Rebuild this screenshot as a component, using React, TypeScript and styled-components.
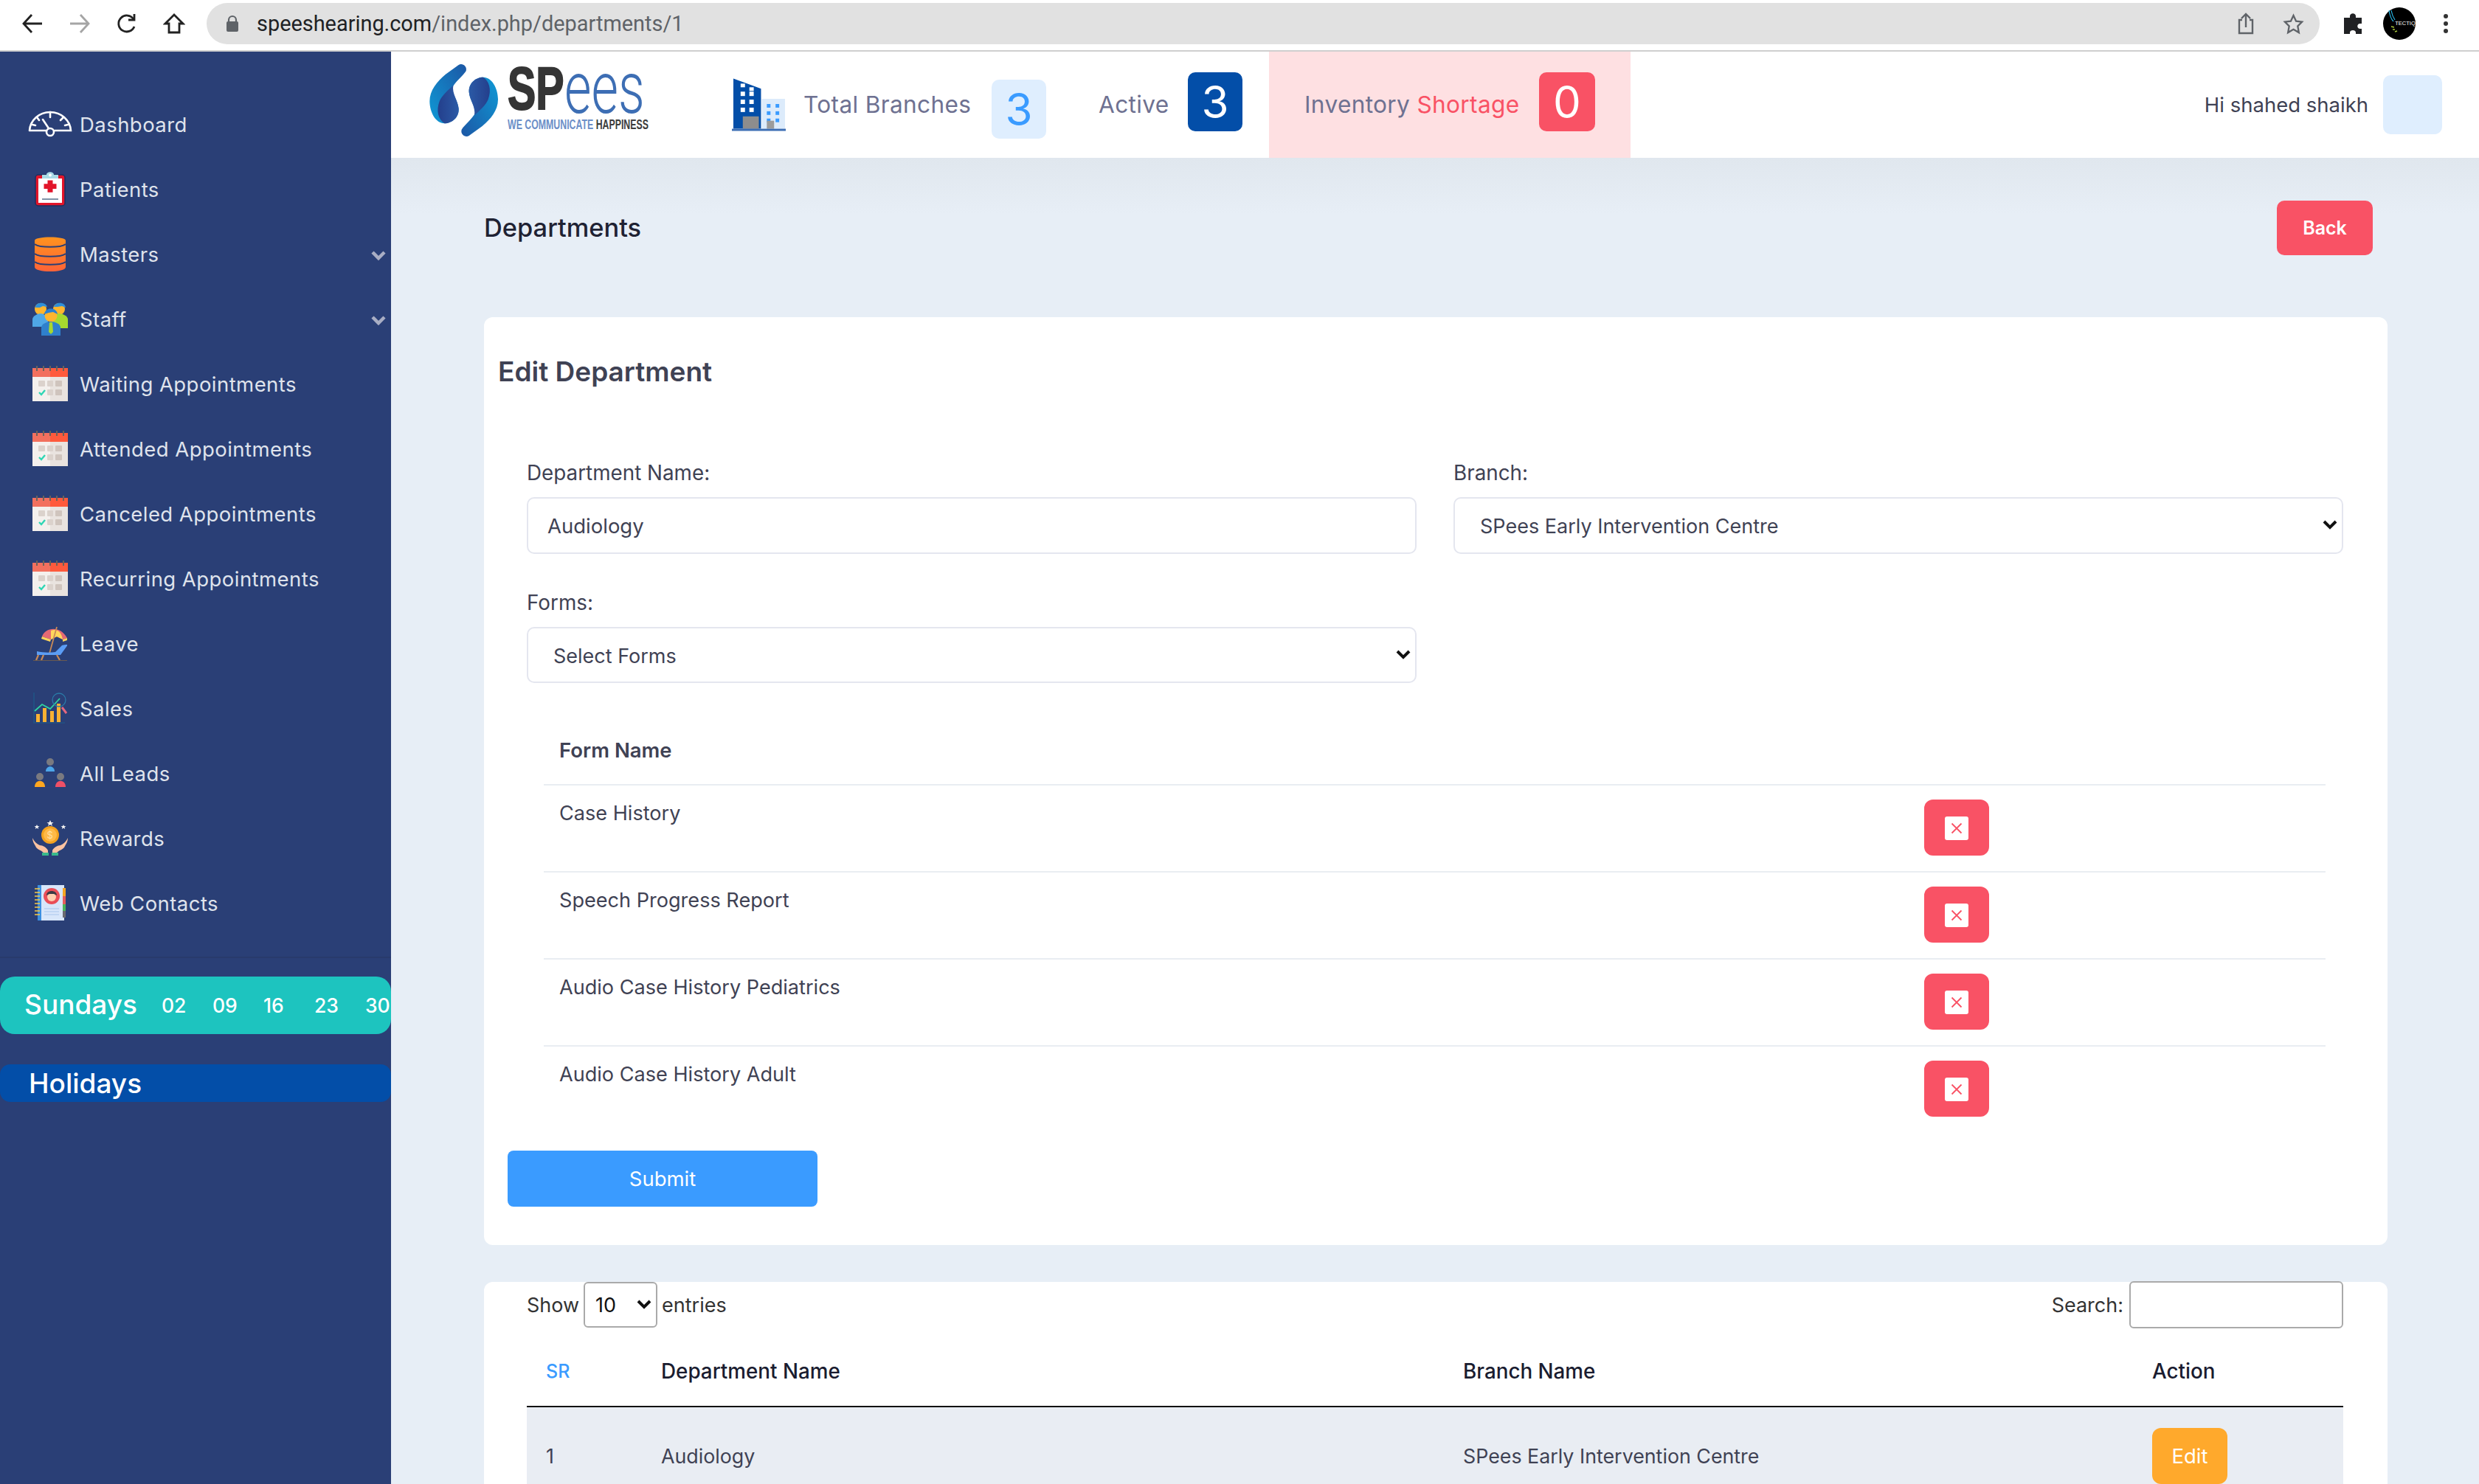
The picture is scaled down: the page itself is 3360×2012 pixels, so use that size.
import React from "react";
import styled, { createGlobalStyle } from "styled-components";

const FONT = `Inter, "Noto Sans", "Liberation Sans", sans-serif`;

const Global = createGlobalStyle`
  html, body { margin: 0; padding: 0; background: #e7eef6; }
  * { box-sizing: border-box; }
  body { font-family: ${FONT}; }
`;

const Page = styled.div`
  width: 3360px;
  height: 2012px;
  overflow: hidden;
  display: flex;
  flex-direction: column;
`;

/* browser chrome */
const Chrome = styled.div`
  height: 70px;
  flex: none;
  background: #fff;
  border-bottom: 2px solid #cfcfcf;
  display: flex;
  align-items: flex-start;
  padding-top: 4px;
`;
const NavIcons = styled.div`
  width: 280px;
  height: 56px;
  flex: none;
  display: grid;
  grid-template-columns: repeat(4, 64px);
  padding-left: 12px;
  align-items: center;
  justify-items: center;
`;
const UrlPill = styled.div`
  width: 2864px;
  height: 56px;
  flex: none;
  background: #e1e1e1;
  border-radius: 28px;
  display: flex;
  align-items: center;
  padding: 0 21px 0 26px;
`;
const Url = styled.div`
  margin-left: 24px;
  flex: 1;
  font: 400 28.9px Roboto, sans-serif;
  color: #5f6368;
  white-space: nowrap;
`;
const UrlHost = styled.span`
  color: #202124;
`;
const PillIcons = styled.div`
  display: flex;
  align-items: center;
  gap: 39px;
`;
const ChromeRight = styled.div`
  flex: 1;
  height: 56px;
  display: flex;
  align-items: center;
  padding-left: 30px;
`;
const PuzzleSlot = styled.div`
  width: 56px;
  display: flex;
`;
const AvatarSlot = styled.div`
  width: 81px;
  display: flex;
`;

const Body = styled.div`
  flex: 1;
  display: flex;
  min-height: 0;
`;

/* sidebar */
const Side = styled.aside`
  width: 530px;
  flex: none;
  background: #2a3f76;
  padding-top: 54px;
`;
const NavRow = styled.div`
  height: 88px;
  display: flex;
  align-items: center;
  padding: 0 7px 0 38px;
  color: #dfe3ec;
  font-size: 27.5px;
  font-weight: 400;
  letter-spacing: 0.45px;
`;
const IconSlot = styled.div`
  width: 60px;
  flex: none;
  display: flex;
  justify-content: center;
  margin-right: 10px;
`;
const NavLabel = styled.span`
  flex: 1;
  white-space: nowrap;
  margin-top: 2px;
`;
const ChevronSlot = styled.span`
  display: flex;
  margin-top: 5px;
`;
const Divider = styled.div`
  height: 2px;
  margin-top: 29px;
  background: #283a6c;
`;
const Sundays = styled.div`
  height: 78px;
  margin-top: 25px;
  background: #1dc4bf;
  border-radius: 20px;
  display: flex;
  align-items: center;
  color: #fff;
  padding-left: 33px;
  white-space: nowrap;
`;
const SundaysTitle = styled.span`
  width: 186px;
  flex: none;
  font-size: 37px;
  font-weight: 500;
  line-height: 44px;
  margin-top: -2px;
`;
const Dates = styled.div`
  display: grid;
  grid-template-columns: repeat(5, 69px);
  font-size: 26.5px;
  font-weight: 500;
`;
const Holidays = styled.div`
  height: 51px;
  margin-top: 41px;
  background: #034ea8;
  border-radius: 14px;
  display: flex;
  align-items: center;
  padding-left: 39px;
  color: #fff;
  font-size: 37px;
  font-weight: 500;
`;

/* main column */
const Main = styled.main`
  flex: 1;
  min-width: 0;
  display: flex;
  flex-direction: column;
  background: linear-gradient(#e0e7ee 144px, #e7eef6 220px, #e7eef6 100%);
`;
const Header = styled.header`
  height: 144px;
  flex: none;
  background: #fff;
  display: flex;
  align-items: stretch;
`;
const LogoBox = styled.div`
  width: 412px;
  flex: none;
  padding: 14px 0 0 49px;
  display: flex;
`;
const LogoText = styled.div`
  margin-left: 9px;
  width: 190px;
`;
const LogoWord = styled.div`
  height: 72px;
  display: flex;
  align-items: flex-end;
  font-family: "Liberation Sans", sans-serif;
  white-space: nowrap;
`;
const LogoSP = styled.span`
  width: 77px;
  flex: none;
  display: block;
  transform: scaleX(0.7);
  transform-origin: left bottom;
  font-size: 82px;
  line-height: 72px;
  font-weight: 700;
  color: #353535;
  -webkit-text-stroke: 2px #353535;
`;
const LogoEes = styled.span`
  display: block;
  transform: scaleX(0.72);
  transform-origin: left bottom;
  font-family: Roboto, sans-serif;
  font-size: 98px;
  line-height: 72px;
  font-weight: 300;
  color: #3d6eb4;
`;
const LogoTag = styled.div`
  margin-top: 4px;
  font: 700 18px/18px "Liberation Sans", sans-serif;
  color: #6c8fc8;
  white-space: nowrap;
  transform: scaleX(0.685);
  transform-origin: left center;
`;
const LogoTagDark = styled.span`
  color: #3c3c3c;
`;
const Stat = styled.div<{ $w: number; $pad?: number; $bg?: string }>`
  width: ${(p) => p.$w}px;
  flex: none;
  display: flex;
  align-items: center;
  padding-left: ${(p) => p.$pad ?? 0}px;
  background: ${(p) => p.$bg ?? "transparent"};
`;
const StatLabel = styled.span<{ $w: number; $gap?: number }>`
  width: ${(p) => p.$w}px;
  margin-left: ${(p) => p.$gap ?? 0}px;
  flex: none;
  font-size: 31.6px;
  color: #6e7191;
  letter-spacing: 0.35px;
  white-space: nowrap;
  margin-top: -2px;
`;
const Shortage = styled.span`
  color: #f95265;
`;
const Count = styled.div<{ $bg: string; $fg: string; $w: number; $up: boolean }>`
  width: ${(p) => p.$w}px;
  height: 80px;
  flex: none;
  border-radius: 10px;
  background: ${(p) => p.$bg};
  color: ${(p) => p.$fg};
  font-size: 60px;
  line-height: 80px;
  text-align: center;
  margin-top: ${(p) => (p.$up ? -8 : 12)}px;
`;
const User = styled.div`
  flex: 1;
  display: flex;
  justify-content: flex-end;
  align-items: center;
  padding: 0 50px 0 0;
  gap: 20px;
  color: #3f4254;
  font-size: 27.5px;
  white-space: nowrap;
`;
const UserBox = styled.div`
  width: 80px;
  height: 80px;
  border-radius: 10px;
  background: #dfeefe;
`;

const Content = styled.div`
  padding: 58px 124px 0 126px;
`;
const PageHead = styled.div`
  height: 74px;
  display: flex;
  justify-content: space-between;
  align-items: center;
  padding-right: 20px;
`;
const PageTitle = styled.h1`
  margin: 0 0 2px;
  font-size: 34.4px;
  font-weight: 500;
  color: #1f2233;
`;
const BackBtn = styled.button`
  width: 130px;
  height: 74px;
  border: 0;
  border-radius: 10px;
  background: #f95265;
  color: #fff;
  font: 600 25px ${FONT};
`;
const Card = styled.section<{ $top: number; $bottom?: number }>`
  margin-top: ${(p) => p.$top}px;
  background: #fff;
  border-radius: 12px;
  padding-bottom: ${(p) => p.$bottom ?? 0}px;
`;
const CardTitle = styled.h2`
  margin: 0;
  padding: 50px 0 0 19px;
  font-size: 37px;
  line-height: 48px;
  font-weight: 600;
  color: #3f4254;
`;
const FormGrid = styled.div`
  margin: 93px 60px 0 58px;
  display: grid;
  grid-template-columns: 1206px 1206px;
  column-gap: 50px;
  row-gap: 46px;
`;
const Field = styled.div``;
const Label = styled.label`
  display: block;
  font-size: 27.8px;
  line-height: 40px;
  color: #3f4254;
  margin-bottom: 13px;
`;
const TextInput = styled.input`
  display: block;
  width: 100%;
  height: 77px;
  padding: 0 26px;
  border: 2px solid #e4e6ef;
  border-radius: 10px;
  font: 400 27.5px ${FONT};
  color: #3f4254;
  background: #fff;
  outline: none;
`;
const SelectWrap = styled.div`
  position: relative;
`;
const NativeSelect = styled.select<{ $h: number }>`
  display: block;
  width: 100%;
  height: ${(p) => p.$h}px;
  padding: 2px 32px 0 34px;
  border: 2px solid #e4e6ef;
  border-radius: 10px;
  appearance: none;
  font: 400 27px ${FONT};
  color: #3f4254;
  background: #fff;
  outline: none;
`;
const SelectArrow = styled.svg<{ $top: number }>`
  position: absolute;
  right: 8px;
  top: ${(p) => p.$top}px;
  width: 20px;
  height: 16px;
`;
const FormsTable = styled.div`
  margin: 71px 84px 0 81px;
`;
const FormsHead = styled.div`
  padding: 0 0 26px 21px;
  font-size: 27.5px;
  line-height: 40px;
  font-weight: 600;
  color: #3f4254;
`;
const FormRow = styled.div`
  height: 118px;
  border-top: 2px solid #e9edf2;
  padding: 18px 0 0 21px;
  display: grid;
  grid-template-columns: 1850px auto;
  align-items: start;
  font-size: 27.1px;
  line-height: 40px;
  color: #3f4254;
`;
const DeleteBtn = styled.button`
  width: 88px;
  height: 76px;
  margin-top: 1px;
  border: 0;
  padding: 0;
  border-radius: 12px;
  background: #f95265;
  display: flex;
  align-items: center;
  justify-content: center;
`;
const XBox = styled.span`
  width: 32px;
  height: 32px;
  margin-top: 1px;
  border-radius: 3px;
  background: #fff;
  display: flex;
  align-items: center;
  justify-content: center;
`;
const SubmitBtn = styled.button`
  display: block;
  width: 420px;
  height: 76px;
  margin: 25px 0 0 32px;
  border: 0;
  border-radius: 8px;
  background: #3a9bff;
  color: #fff;
  font: 400 27.5px ${FONT};
`;
const Toolbar = styled.div`
  height: 64px;
  padding: 0 60px 0 58px;
  display: flex;
  justify-content: space-between;
  align-items: flex-start;
  font-size: 27px;
  color: #333;
`;
const ToolGroup = styled.div`
  display: flex;
  align-items: center;
  gap: 6px;
  height: 62px;
  white-space: nowrap;
`;
const LenWrap = styled.div`
  position: relative;
`;
const LenSelect = styled.select`
  display: block;
  width: 100px;
  height: 62px;
  padding: 0 14px;
  border: 2px solid #aaa;
  border-radius: 6px;
  appearance: none;
  font: 400 27px ${FONT};
  color: #111;
  background: #fff;
`;
const SearchInput = styled.input`
  width: 290px;
  height: 64px;
  margin-left: 2px;
  border: 2px solid #aaa;
  border-radius: 6px;
  background: #fff;
  outline: none;
`;
const DataTable = styled.div`
  margin: 0 60px 0 58px;
`;
const DataHead = styled.div`
  height: 106px;
  padding: 10px 0 0 26px;
  border-bottom: 2px solid #111;
  display: grid;
  grid-template-columns: 156px 1087px 934px 1fr;
  align-items: center;
  font-size: 27.8px;
  font-weight: 500;
  color: #1a1c30;
`;
const SrHead = styled.span`
  color: #3a9bff;
  font-size: 25px;
`;
const DataRow = styled.div`
  height: 132px;
  padding-left: 26px;
  background: #e9edf3;
  display: grid;
  grid-template-columns: 156px 1087px 934px 1fr;
  align-items: center;
  font-size: 26.8px;
  color: #3f4254;
`;
const EditBtn = styled.button`
  width: 102px;
  height: 76px;
  border: 0;
  border-radius: 12px;
  background: #ffa92c;
  color: #fff;
  font: 400 27.5px ${FONT};
`;

/* icons */
const Gauge = () => (
  <svg width="60" height="36" viewBox="0 0 60 36" fill="none" stroke="#fff" strokeWidth="2.6" strokeLinecap="round">
    <path d="M2 27C3 13 15 2 30 2s27 11 28 25H36M24 27H2" />
    <circle cx="30" cy="29" r="5" />
    <path d="M28 24 20 12M30 2v7M12 9l3 4M48 9l-4 4M6 19l4 1M54 19l-4 1" />
  </svg>
);
const Clip = () => (
  <svg width="42" height="48" viewBox="0 0 42 48">
    <rect x="1" y="5" width="40" height="42" rx="4" fill="#e2152a" stroke="#1c2f60" strokeWidth="1.5" />
    <rect x="5" y="10" width="32" height="33" fill="#fff" />
    <path d="M10 10V5h6c0-5 10-5 10 0h6v5z" fill="#a9dbe6" />
    <circle cx="21" cy="5.5" r="2" fill="#fff" />
    <path d="M17.5 14h7v5h5v7h-5v5h-7v-5h-5v-7h5z" fill="#e2152a" transform="translate(0 -1) scale(1 .96)" />
    <rect x="10" y="37" width="22" height="2" fill="#7f93a8" />
  </svg>
);
const Db = () => (
  <svg width="42" height="48" viewBox="0 0 42 48">
    <defs>
      <linearGradient id="dbg" x1="0" y1="0" x2="0" y2="1">
        <stop offset="0" stopColor="#ff931e" />
        <stop offset="1" stopColor="#ff6338" />
      </linearGradient>
    </defs>
    <path d="M0 6C0 0 42 0 42 6v36c0 8-42 8-42 0z" fill="url(#dbg)" />
    <path d="M0 11c6 5 36 5 42 0M0 24c6 5 36 5 42 0M0 35c6 5 36 5 42 0" fill="none" stroke="#2a3f76" strokeWidth="2" />
  </svg>
);
const Staff = () => (
  <svg width="48" height="46" viewBox="0 0 48 46">
    <circle cx="11" cy="10" r="8" fill="#ffb52e" />
    <path d="M4 8C4 0 18 0 20 7l-6-1-4 2z" fill="#2f8fd8" />
    <circle cx="36" cy="10" r="8" fill="#ffb52e" />
    <path d="M29 7c2-7 15-7 16 1l-5-2-6 1z" fill="#2f8fd8" />
    <path d="M0 34V24c0-5 8-8 11-8s10 3 10 8v10z" fill="#4fa7e6" />
    <path d="M48 36V24c0-5-8-8-12-8s-10 3-10 8v12z" fill="#a6d82f" />
    <circle cx="25" cy="19" r="8.5" fill="#ffb52e" />
    <path d="M16 17c1-10 17-10 18 0l-6-3-6 1z" fill="#2b7fd0" />
    <path d="M12 46V35c0-5 8-8 13-8s13 3 13 8v11z" fill="#2f80cc" />
    <path d="M23 28h4l1 13-3 3-3-3z" fill="#a6d82f" />
  </svg>
);
const Calendar = () => (
  <svg width="48" height="48" viewBox="0 0 48 48">
    <rect y="14" width="48" height="34" fill="#f4f0ed" />
    <rect x="24" y="14" width="24" height="34" fill="#e9e3df" />
    <rect y="3" width="24" height="12" fill="#f2705e" />
    <rect x="24" y="3" width="24" height="12" fill="#ff5a3c" />
    <path d="M6 0v7M15 0v7M24 0v7M33 0v7M42 0v7" stroke="#6b6259" strokeWidth="2" />
    <g fill="#dbd2cc">
      <rect x="8" y="20" width="9" height="8" rx="1" />
      <rect x="20" y="20" width="8" height="8" rx="1" />
      <rect x="31" y="20" width="9" height="8" rx="1" fill="#cfc4bd" />
      <rect x="20" y="32" width="8" height="8" rx="1" />
      <rect x="31" y="32" width="9" height="8" rx="1" fill="#cfc4bd" />
    </g>
    <path d="M9 36l3 3 5-6" fill="none" stroke="#2fd6b4" strokeWidth="2.4" />
  </svg>
);
const Leave = () => (
  <svg width="46" height="47" viewBox="0 0 46 47">
    <path d="M12 14C16 2 36-2 46 16l-6 2-8-4-8 4z" fill="#e56a74" />
    <path d="M24 6c7-3 14 0 16 12l-8-4-8 4z" fill="#ffd65c" />
    <path d="M12 14l12 4-1 3-12-4zM40 18l6-2 0 3-6 2z" fill="#ffd65c" />
    <path d="M32 1 22 37" stroke="#c98a57" strokeWidth="1.8" />
    <path d="M5 34c8 2 18 2 25 1l9-9c3-1 6-1 8-1L37 39H5z" fill="#5b9df5" />
    <path d="M7 39l-3 7M32 39l4 7M14 39l-3 7" stroke="#c98a57" strokeWidth="2.2" />
    <path d="M0 46.5h46" stroke="#6a5a50" strokeWidth="1" />
  </svg>
);
const Sales = () => (
  <svg width="46" height="42" viewBox="0 0 46 42">
    <path d="M1 0v41h42" stroke="#1d5c8a" strokeWidth="1.2" fill="none" />
    <g fill="#f8b133">
      <rect x="4" y="29" width="5" height="11" />
      <rect x="13" y="21" width="5" height="19" />
      <rect x="23" y="25" width="5" height="15" />
      <rect x="32" y="15" width="5" height="25" />
    </g>
    <path d="M2 25l10-9 11 6 13-14" fill="none" stroke="#2fd3a2" strokeWidth="1.8" />
    <circle cx="35" cy="10" r="9" fill="none" stroke="#2a7ca8" strokeWidth="1.3" />
    <path d="M39 20l6 8" stroke="#e5677f" strokeWidth="3" />
  </svg>
);
const Leads = () => (
  <svg width="42" height="40" viewBox="0 0 42 40">
    <circle cx="21" cy="5" r="5" fill="#7a7a80" />
    <path d="M15 18c0-9 12-9 12 0z" fill="#4da6ea" />
    <circle cx="7" cy="25" r="5" fill="#7a7a80" />
    <path d="M0 39c0-11 14-11 14 0z" fill="#ffa61f" />
    <circle cx="35" cy="25" r="5" fill="#7a7a80" />
    <path d="M28 39c0-11 14-11 14 0z" fill="#ef5067" />
    <path d="M12 40h18" stroke="#3b3f7a" strokeWidth="1" />
  </svg>
);
const Rewards = () => (
  <svg width="48" height="48" viewBox="0 0 48 48">
    <circle cx="24" cy="20" r="12" fill="#f4a21f" />
    <circle cx="24" cy="20" r="9" fill="#ffb947" />
    <text x="24" y="25" textAnchor="middle" fontSize="13" fontFamily="Inter, sans-serif" fill="#ffe0a6">$</text>
    <path d="M24 0l1.5 3h3l-2.500 2 1 3-3-2-3 2 1-3-2.500-2h3zM6 6l1 2h2.500l-2 1.500.7 2.500L6 10.500 3.800 12l.7-2.500-2-1.500H5zM42 6l1 2h2.500l-2 1.500.7 2.500-2.200-1.500-2.200 1.500.7-2.500-2-1.500H41z" fill="#f2f2f2" />
    <path d="M0 24c3 6 6 8 10 10 4 0 9 3 11 7v3h-6c-4-4-9-4-11-9-2-3-4-7-4-11zM48 24c-3 6-6 8-10 10-4 0-9 3-11 7v3h6c4-4 9-4 11-9 2-3 4-7 4-11z" fill="#fbc3a1" />
    <rect x="13" y="44" width="9" height="4" fill="#39b98c" />
    <rect x="26" y="44" width="9" height="4" fill="#39b98c" />
  </svg>
);
const Contacts = () => (
  <svg width="42" height="48" viewBox="0 0 42 48">
    <rect x="4" y="0" width="36" height="48" fill="#d8e6fa" />
    <rect x="4" y="0" width="5" height="48" fill="#3c8fe0" />
    <path d="M0 5h7M0 10h7M0 15h7M0 20h7M0 25h7M0 30h7M0 35h7M0 40h7" stroke="#f6c945" strokeWidth="1.6" />
    <rect x="38" y="4" width="4" height="11" fill="#f5a623" />
    <rect x="38" y="15" width="4" height="11" fill="#e55c5c" />
    <rect x="38" y="26" width="4" height="9" fill="#4bb35a" />
    <rect x="38" y="35" width="4" height="9" fill="#6a6a70" />
    <circle cx="23" cy="15" r="11" fill="#ea4e58" />
    <circle cx="23" cy="16" r="6" fill="#ffcfb0" />
    <path d="M16 14c0-8 14-8 14 0l-4-2h-6z" fill="#3a3a44" />
    <path d="M13 32h20M13 36h20M13 40h20" stroke="#a9c6ec" strokeWidth="1" />
  </svg>
);
const Chevron = () => (
  <svg width="20" height="14" viewBox="0 0 20 14" fill="none" stroke="#a9aec4" strokeWidth="4.5">
    <path d="M2 2l8 8 8-8" />
  </svg>
);

const Building = () => (
  <svg width="74" height="72" viewBox="0 0 74 72">
    <path d="M41 28h32v41H41z" fill="#dcebfb" />
    <path d="M2 69V0l38 14v55z" fill="#034ea8" />
    <g fill="#fff">
      {[22, 33, 44].map((y) =>
        [12, 24].map((x) => <rect key={`${x}-${y}`} x={x} y={y - 4} width="6" height="6" />)
      )}
      <rect x="12" y="7" width="6" height="5" />
      <rect x="24" y="12" width="6" height="5" />
    </g>
    <g fill="#3a9bff">
      {[35, 45, 55].map((y) =>
        [48, 60].map((x) => <rect key={`${x}-${y}`} x={x} y={y} width="5" height="5" />)
      )}
    </g>
    <rect x="15" y="52" width="22" height="17" fill="#8d8d8d" />
    <rect x="48" y="58" width="10" height="11" fill="#9c9c9c" />
    <rect y="69" width="74" height="3" fill="#3d6eb4" />
  </svg>
);

const LogoMark = () => (
  <svg width="100" height="105" viewBox="50 35 300 315">
    <defs>
      <linearGradient id="lg1" x1="0" y1="1" x2="1" y2="0">
        <stop offset="0" stopColor="#0f9ad6" />
        <stop offset="1" stopColor="#1c57a5" />
      </linearGradient>
      <linearGradient id="lg2" x1="0" y1="0" x2="1" y2="0">
        <stop offset="0" stopColor="#243f8c" />
        <stop offset="1" stopColor="#2b5aa6" />
      </linearGradient>
    </defs>
    {[0, 180].map((r) => (
      <g key={r} transform={`rotate(${r} 199 191)`}>
        <path d="M178 47C192 38 214 52 208 72 195 92 165 115 152 140 150 165 175 190 178 225 180 262 150 285 120 285 85 285 60 240 60 195 60 150 90 115 125 85Z" fill="url(#lg1)" />
        <path d="M156 130C150 165 175 190 178 225 180 262 150 285 120 285 96 270 85 235 100 195 110 170 135 150 156 130Z" fill="url(#lg2)" />
      </g>
    ))}
  </svg>
);

const XIcon = () => (
  <svg width="16" height="16" viewBox="0 0 16 16" stroke="#f95265" strokeWidth="1.8">
    <path d="M1.500 1.500l13 13M14.500 1.500l-13 13" />
  </svg>
);

const Profile = () => (
  <svg width="44" height="44" viewBox="0 0 44 44">
    <circle cx="22" cy="22" r="22" fill="#000" />
    <path d="M8 4c1 7 3 12 6 15M11 4c1 6 3 10 5 13" stroke="#27b5e6" strokeWidth="1.2" fill="none" />
    <path d="M11 26l4 1M13 30l3 0M16 33l3-1" stroke="#a8c83a" strokeWidth="1.4" />
    <text x="30" y="24" textAnchor="middle" fontSize="7.5" fontFamily="'Liberation Sans', sans-serif" fill="#fff">TECTIQ</text>
  </svg>
);

const items: [string, React.ReactNode, boolean?][] = [
  ["Dashboard", <Gauge />],
  ["Patients", <Clip />],
  ["Masters", <Db />, true],
  ["Staff", <Staff />, true],
  ["Waiting Appointments", <Calendar />],
  ["Attended Appointments", <Calendar />],
  ["Canceled Appointments", <Calendar />],
  ["Recurring Appointments", <Calendar />],
  ["Leave", <Leave />],
  ["Sales", <Sales />],
  ["All Leads", <Leads />],
  ["Rewards", <Rewards />],
  ["Web Contacts", <Contacts />],
];

const formNames = ["Case History", "Speech Progress Report", "Audio Case History Pediatrics", "Audio Case History Adult"];

const Arrow = ({ top }: { top: number }) => (
  <SelectArrow $top={top} viewBox="0 0 20 16" fill="none" stroke="#111" strokeWidth="4">
    <path d="M2 3l8 8 8-8" />
  </SelectArrow>
);

export default function App() {
  return (
    <Page>
      <Global />
      <Chrome>
        <NavIcons>
          <svg width="30" height="28" viewBox="0 0 30 28" fill="none" stroke="#222" strokeWidth="2.8"><path d="M28 14H3M14 2 3 14l11 12" /></svg>
          <svg width="30" height="28" viewBox="0 0 30 28" fill="none" stroke="#a5a5a5" strokeWidth="2.8"><path d="M2 14h25M16 2l11 12-11 12" /></svg>
          <svg width="30" height="30" viewBox="0 0 30 30" fill="none" stroke="#222" strokeWidth="2.8"><path d="M25 19a11 11 0 1 1-1-10" /><path d="M25 2v8h-8" /></svg>
          <svg width="30" height="30" viewBox="0 0 30 30" fill="none" stroke="#222" strokeWidth="2.8"><path d="M15 3 3 15h5v12h14V15h5z" /></svg>
        </NavIcons>
        <UrlPill>
          <svg width="18" height="24" viewBox="0 0 18 24"><path d="M4 10V7a5 5 0 0 1 10 0v3" fill="none" stroke="#5f6368" strokeWidth="2.2" /><rect x="1" y="9" width="16" height="14" rx="2" fill="#5f6368" /></svg>
          <Url><UrlHost>speeshearing.com</UrlHost>/index.php/departments/1</Url>
          <PillIcons>
            <svg width="22" height="30" viewBox="0 0 22 30" fill="none" stroke="#5f6368" strokeWidth="2.4"><path d="M6 10H2v18h18V10h-4M11 20V2M5 8l6-6 6 6" /></svg>
            <svg width="29" height="29" viewBox="0 0 30 30" fill="none" stroke="#5f6368" strokeWidth="2.4"><path d="M15 3l3.700 8 8.300 1-6 6 1.600 9L15 22.500 7.400 27 9 18l-6-6 8.300-1z" /></svg>
          </PillIcons>
        </UrlPill>
        <ChromeRight>
          <PuzzleSlot>
            <svg width="30" height="30" viewBox="0 0 30 30"><path d="M11 5c0-5 8-5 8 0v2h8v8h-2c-5 0-5 7 0 7h2v7h-8v-2c0-4-8-4-8 0v2H3V7h8z" fill="#202124" /></svg>
          </PuzzleSlot>
          <AvatarSlot>
            <Profile />
          </AvatarSlot>
          <svg width="8" height="30" viewBox="0 0 8 30" fill="#333"><circle cx="4" cy="5" r="3" /><circle cx="4" cy="15" r="3" /><circle cx="4" cy="25" r="3" /></svg>
        </ChromeRight>
      </Chrome>
      <Body>
        <Side>
          {items.map(([label, icon, more]) => (
            <NavRow key={label}>
              <IconSlot>{icon}</IconSlot>
              <NavLabel>{label}</NavLabel>
              {more ? <ChevronSlot><Chevron /></ChevronSlot> : null}
            </NavRow>
          ))}
          <Divider />
          <Sundays>
            <SundaysTitle>Sundays</SundaysTitle>
            <Dates>
              <span>02</span>
              <span>09</span>
              <span>16</span>
              <span>23</span>
              <span>30</span>
            </Dates>
          </Sundays>
          <Holidays>Holidays</Holidays>
        </Side>
        <Main>
          <Header>
            <LogoBox>
              <LogoMark />
              <LogoText>
                <LogoWord>
                  <LogoSP>SP</LogoSP>
                  <LogoEes>ees</LogoEes>
                </LogoWord>
                <LogoTag>WE COMMUNICATE <LogoTagDark>HAPPINESS</LogoTagDark></LogoTag>
              </LogoText>
            </LogoBox>
            <Stat $w={476} $pad={50}>
              <Building />
              <StatLabel $w={255} $gap={24}>Total Branches</StatLabel>
              <Count $bg="#dfeefe" $fg="#3a9bff" $w={74} $up={false}>3</Count>
            </Stat>
            <Stat $w={302} $pad={71}>
              <StatLabel $w={121}>Active</StatLabel>
              <Count $bg="#034ea8" $fg="#fff" $w={74} $up>3</Count>
            </Stat>
            <Stat $w={490} $pad={48} $bg="#fee0e2">
              <StatLabel $w={318}>Inventory <Shortage>Shortage</Shortage></StatLabel>
              <Count $bg="#f95265" $fg="#fff" $w={76} $up>0</Count>
            </Stat>
            <User>
              Hi shahed shaikh
              <UserBox />
            </User>
          </Header>
          <Content>
            <PageHead>
              <PageTitle>Departments</PageTitle>
              <BackBtn>Back</BackBtn>
            </PageHead>
            <Card $top={84} $bottom={52}>
              <CardTitle>Edit Department</CardTitle>
              <FormGrid>
                <Field>
                  <Label>Department Name:</Label>
                  <TextInput defaultValue="Audiology" />
                </Field>
                <Field>
                  <Label>Branch:</Label>
                  <SelectWrap>
                    <NativeSelect $h={77} defaultValue="SPees Early Intervention Centre">
                      <option>SPees Early Intervention Centre</option>
                    </NativeSelect>
                    <Arrow top={30} />
                  </SelectWrap>
                </Field>
                <Field>
                  <Label>Forms:</Label>
                  <SelectWrap>
                    <NativeSelect $h={76} defaultValue="Select Forms">
                      <option>Select Forms</option>
                    </NativeSelect>
                    <Arrow top={30} />
                  </SelectWrap>
                </Field>
              </FormGrid>
              <FormsTable>
                <FormsHead>Form Name</FormsHead>
                {formNames.map((n) => (
                  <FormRow key={n}>
                    <span>{n}</span>
                    <DeleteBtn>
                      <XBox><XIcon /></XBox>
                    </DeleteBtn>
                  </FormRow>
                ))}
              </FormsTable>
              <SubmitBtn>Submit</SubmitBtn>
            </Card>
            <Card $top={50}>
              <Toolbar>
                <ToolGroup>
                  Show
                  <LenWrap>
                    <LenSelect defaultValue="10">
                      <option>10</option>
                    </LenSelect>
                    <Arrow top={23} />
                  </LenWrap>
                  entries
                </ToolGroup>
                <ToolGroup>
                  Search:
                  <SearchInput />
                </ToolGroup>
              </Toolbar>
              <DataTable>
                <DataHead>
                  <SrHead>SR</SrHead>
                  <span>Department Name</span>
                  <span>Branch Name</span>
                  <span>Action</span>
                </DataHead>
                <DataRow>
                  <span>1</span>
                  <span>Audiology</span>
                  <span>SPees Early Intervention Centre</span>
                  <EditBtn>Edit</EditBtn>
                </DataRow>
              </DataTable>
            </Card>
          </Content>
        </Main>
      </Body>
    </Page>
  );
}
